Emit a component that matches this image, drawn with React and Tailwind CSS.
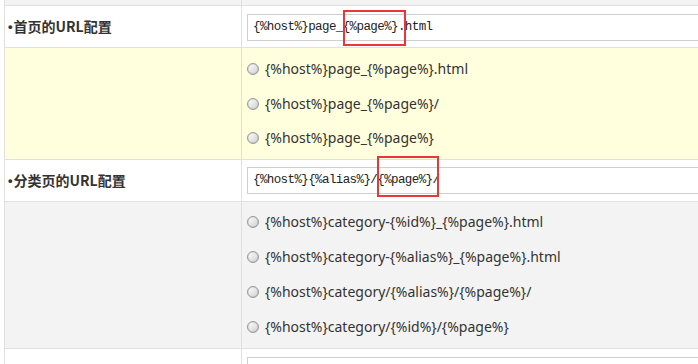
import React from "react";

const Radio = () => (
  <span className="inline-block w-[12px] h-[12px] rounded-full border border-[#9a9a9a] bg-gradient-to-br from-[#ffffff] to-[#d0d0d0] shadow-[inset_0_0_1px_#888] shrink-0" />
);

const Option = ({ text, h }) => (
  <div className={`flex items-center ${h}`}>
    <Radio />
    <span className="ml-[6px] text-[14px] text-[#333] leading-none" style={{ fontFamily: '"Noto Sans","Noto Sans CJK SC",sans-serif' }}>
      {text}
    </span>
  </div>
);

const Boxed = ({ children, box }) => (
  <span className="relative">
    {children}
    <span className={`absolute border-2 border-[#ee3535] ${box}`} />
  </span>
);

const UrlInput = ({ children }) => (
  <div
    className="h-[27px] w-full border border-[#cfcfcf] bg-white flex items-center pl-[5px] text-[12.5px] tracking-[-0.6px] text-[#222]"
    style={{ fontFamily: '"Liberation Mono",monospace' }}
  >
    <span className="whitespace-pre leading-[13px]">{children}</span>
  </div>
);

const Label = ({ children }) => (
  <span className="pl-[3px] font-bold text-[#333] flex items-center">
    <span style={{ fontFamily: '"Liberation Sans",sans-serif' }} className="mr-[1px] text-[13px]">•</span>
    <span style={{ fontFamily: '"Noto Sans CJK SC",sans-serif' }} className="text-[14px]">{children}</span>
  </span>
);

export default function App() {
  return (
    <div className="w-[698px] h-[364px] overflow-hidden bg-white pl-[4px]">
      <div className="border-l border-[#e0e0e0] w-[720px]">
        <div className="grid grid-cols-[237px_1fr] h-[6px] border-b border-[#e0e0e0] bg-[#f3f3f3]">
          <div className="border-r border-[#e0e0e0]" />
          <div />
        </div>
        <div className="grid grid-cols-[237px_1fr] h-[42px] border-b border-[#e0e0e0] bg-white">
          <div className="border-r border-[#e0e0e0] flex items-center">
            <Label>首页的URL配置</Label>
          </div>
          <div className="flex items-center pl-[5px] pt-[1px]">
            <UrlInput>
              {"{%host%}page_"}
              <Boxed box="left-[0px] right-[-8px] top-[-10px] bottom-[-12px]">{"{%page%}"}</Boxed>
              {".html"}
            </UrlInput>
          </div>
        </div>
        <div className="grid grid-cols-[237px_1fr] h-[112px] border-b border-[#e0e0e0] bg-[#ffffdd]">
          <div className="border-r border-[#e0e0e0]" />
          <div className="pl-[5px] pt-[4px] flex flex-col">
            <Option h="h-[34.5px]" text="{%host%}page_{%page%}.html" />
            <Option h="h-[34.5px]" text="{%host%}page_{%page%}/" />
            <Option h="h-[34.5px]" text="{%host%}page_{%page%}" />
          </div>
        </div>
        <div className="grid grid-cols-[237px_1fr] h-[42px] border-b border-[#e0e0e0] bg-white">
          <div className="border-r border-[#e0e0e0] flex items-center">
            <Label>分类页的URL配置</Label>
          </div>
          <div className="flex items-center pl-[5px]">
            <UrlInput>
              {"{%host%}{%alias%}/"}
              <Boxed box="left-[0px] right-[-7px] top-[-17px] bottom-[-10px]">{"{%page%}"}</Boxed>
              {"/"}
            </UrlInput>
          </div>
        </div>
        <div className="grid grid-cols-[237px_1fr] h-[147px] border-b border-[#e0e0e0] bg-[#f3f3f3]">
          <div className="border-r border-[#e0e0e0]" />
          <div className="pl-[5px] pt-[2.5px] flex flex-col">
            <Option h="h-[35px]" text="{%host%}category-{%id%}_{%page%}.html" />
            <Option h="h-[35px]" text="{%host%}category-{%alias%}_{%page%}.html" />
            <Option h="h-[35px]" text="{%host%}category/{%alias%}/{%page%}/" />
            <Option h="h-[35px]" text="{%host%}category/{%id%}/{%page%}" />
          </div>
        </div>
        <div className="grid grid-cols-[237px_1fr] h-[40px] bg-white">
          <div className="border-r border-[#e0e0e0]" />
          <div className="pl-[5px] pt-[8px]">
            <UrlInput>{""}</UrlInput>
          </div>
        </div>
      </div>
    </div>
  );
}
